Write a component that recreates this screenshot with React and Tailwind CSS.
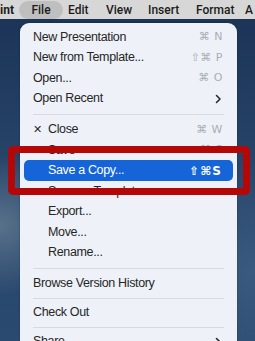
import React from "react";

const FONT = "font-['Liberation_Sans','Helvetica',sans-serif]";
const SYM = "font-['DejaVu_Sans','Liberation_Sans',sans-serif]";

function Row({ label, shortcut, indent, chevron, icon }) {
  return (
    <div className="h-[20.5px] flex items-center justify-between pl-[13px] pr-[14px]">
      <div className="flex items-center">
        {icon ? (
          <span className={`${SYM} w-[15px] text-[11px] text-[#2a2a2a]`}>✕</span>
        ) : indent ? (
          <span className="w-[15px]" />
        ) : null}
        <span className="text-[12.5px] tracking-[-0.35px] text-[#262626]">{label}</span>
      </div>
      {shortcut && (
        <span className={`${SYM} text-[11px] text-[#a9aeb5] tracking-[0.5px]`}>{shortcut}</span>
      )}
      {chevron && (
        <svg width="7" height="10" viewBox="0 0 7 10" className="mr-[1px]">
          <path d="M1.5 1.5 L5 5 L1.5 8.5" fill="none" stroke="#2a2a2a" strokeWidth="1.6" strokeLinecap="round" strokeLinejoin="round" />
        </svg>
      )}
    </div>
  );
}

function Sep({ h }) {
  return (
    <div className={`${h} flex items-center px-[13px]`}>
      <div className="h-px w-full bg-[#d7dbe1]" />
    </div>
  );
}

export default function App() {
  return (
    <div
      className={`${FONT} relative w-[255px] h-[341px] overflow-hidden bg-[radial-gradient(ellipse_at_0%_66%,#58718b_0%,transparent_22%),radial-gradient(ellipse_at_100%_80%,#3b5a80_0%,transparent_30%),linear-gradient(180deg,#1b3254_0%,#264368_45%,#2b4a70_100%)]`}
    >
      <div className="h-[19px] bg-[#d7d7d7] flex items-center font-['Roboto',sans-serif] font-medium text-[12px] text-[#1c1c1c] whitespace-nowrap">
        <span className="shrink-0 w-[19px] flex justify-end pr-[5px] font-bold">int</span>
        <span className="shrink-0 h-[18px] w-[44px] rounded-full bg-[#bfbfbf] flex items-center justify-center">
          File
        </span>
        <span className="shrink-0 ml-[5px] w-[38px]">Edit</span>
        <span className="shrink-0 w-[42px]">View</span>
        <span className="shrink-0 w-[48px]">Insert</span>
        <span className="shrink-0 w-[49px]">Format</span>
        <span className="shrink-0">A</span>
      </div>

      <div className="pl-[20px] pt-[4px]">
        <div className="w-[217px] h-[330px] rounded-t-[9px] bg-[#eef2f8] pt-[4px] shadow-[0_0_2px_rgba(0,0,0,0.35)]">
          <Row label="New Presentation" shortcut="⌘ N" />
          <Row label="New from Template..." shortcut="⇧⌘ P" />
          <Row label="Open..." shortcut="⌘ O" />
          <Row label="Open Recent" chevron />
          <Sep h="h-[10.5px]" />
          <Row label="Close" shortcut="⌘ W" icon />
          <Row label="Save" shortcut="⌘ S" indent />
          <div className="h-[20.5px] px-[4px] flex items-center">
            <div className="h-[21px] w-full rounded-[5px] bg-[#1565d8] flex items-center justify-between pl-[24px] pr-[11px] text-white">
              <span className="text-[12.5px] tracking-[-0.35px]">Save a Copy...</span>
              <span className={`${SYM} text-[12px] font-bold tracking-[1px]`}>⇧⌘S</span>
            </div>
          </div>
          <Row label="Save as Template..." indent />
          <Row label="Export..." indent />
          <Row label="Move..." indent />
          <Row label="Rename..." indent />
          <Sep h="h-[10.5px]" />
          <Row label="Browse Version History" />
          <Sep h="h-[8.5px]" />
          <Row label="Check Out" />
          <Sep h="h-[8.5px]" />
          <Row label="Share" chevron />
        </div>
      </div>

      <div className="absolute left-[8px] top-[146px] w-[242px] h-[49px] border-[7px] border-[#b40808] rounded-[5px]" />
    </div>
  );
}
